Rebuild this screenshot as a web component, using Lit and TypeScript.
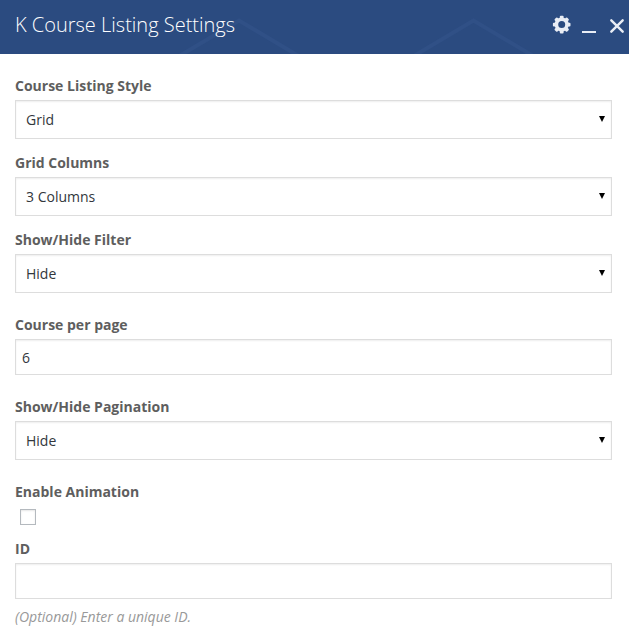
import { LitElement, html, css, svg } from "lit";
import { customElement, property } from "lit/decorators.js";
import { classMap } from "lit/directives/class-map.js";

const teeth = [0, 45, 90, 135, 180, 225, 270, 315];

@customElement("panel-header")
class PanelHeader extends LitElement {
  @property() heading = "";

  static styles = css`
    :host {
      display: flex;
      box-sizing: border-box;
      height: 54px;
      background: #2b4b80;
      color: #fff;
      position: relative;
      overflow: hidden;
      padding-left: 15px;
    }
    .pattern {
      position: absolute;
      inset: 0;
      width: 629px;
      height: 54px;
      fill: none;
      stroke: #305086;
      stroke-width: 4;
    }
    h1 {
      position: relative;
      flex: 1;
      margin: 0;
      font-size: 20px;
      font-weight: 300;
      line-height: 50px;
      white-space: nowrap;
    }
    .controls {
      position: relative;
      display: flex;
      padding-top: 15px;
    }
    .controls svg {
      display: block;
      height: 20px;
    }
    .gear { width: 20px; margin-right: 10px; }
    .minimize { width: 14px; margin-right: 13px; }
    .close { width: 20px; }
  `;

  render() {
    return html`
      <svg class="pattern" viewBox="0 0 629 54">
        <path d="M176 58 239 20.5 302 58M410.5 58 473.5 20.5 536.5 58" />
      </svg>
      <h1>${this.heading}</h1>
      <div class="controls">
        <svg class="gear" viewBox="0 0 20 20" fill="#e9edf5">
          ${teeth.map((a) => svg`<rect x="7.8" y="0.8" width="3.8" height="4" rx="1" transform="rotate(${a} 9.7 9.6)" />`)}
          <circle cx="9.7" cy="9.6" r="5.3" fill="none" stroke="#e9edf5" stroke-width="3.6" />
        </svg>
        <svg class="minimize" viewBox="0 0 14 20"><path fill="#e9edf5" d="M0 16h14v2H0z" /></svg>
        <svg class="close" viewBox="0 0 20 20">
          <path d="M2.3 5.3 13.7 16.7M13.7 5.3 2.3 16.7" fill="none" stroke="#e9edf5" stroke-width="2.4" stroke-linecap="round" />
        </svg>
      </div>
    `;
  }
}

@customElement("setting-field")
class SettingField extends LitElement {
  @property() label = "";
  @property() kind = "text";
  @property() value = "";
  @property() hint = "";

  static styles = css`
    :host { display: block; }
    .label {
      height: 20px;
      margin-bottom: 4px;
      font-weight: 700;
      line-height: 20px;
      color: #5e5e5e;
    }
    .control {
      display: flex;
      align-items: center;
      justify-content: space-between;
      box-sizing: border-box;
      height: 36px;
      padding: 0 6px;
      border: 1px solid #ddd;
      box-shadow: inset 0 1px 2px rgba(0, 0, 0, 0.07);
      background: #fff;
      color: #32373c;
    }
    .select { height: 39px; padding: 0 6px 0 10px; }
    .arrow { width: 6px; height: 6px; margin-bottom: 1px; }
    .checkbox {
      box-sizing: border-box;
      width: 16px;
      height: 16px;
      margin: 7px 0 0 5px;
      border: 1px solid #b4b9be;
      box-shadow: inset 0 1px 2px rgba(0, 0, 0, 0.1);
    }
    .hint {
      margin-top: 8px;
      line-height: 20px;
      font-style: italic;
      color: #999;
    }
  `;

  render() {
    const select = this.kind === "select";
    return html`
      <div class="label">${this.label}</div>
      ${this.kind === "checkbox"
        ? html`<div class="checkbox"></div>`
        : html`<div class=${classMap({ control: true, select })}>
            <span>${this.value}</span>
            ${select
              ? html`<svg class="arrow" viewBox="0 0 6 6"><path d="M0 0h6L3 6z" /></svg>`
              : null}
          </div>`}
      ${this.hint ? html`<div class="hint">${this.hint}</div>` : null}
    `;
  }
}

@customElement("app-root")
class AppRoot extends LitElement {
  static styles = css`
    :host {
      display: block;
      height: 635px;
      overflow: hidden;
      background: #fff;
      font: 14px "Open Sans", "Noto Sans", sans-serif;
    }
    .form {
      display: flex;
      flex-direction: column;
      gap: 22px;
      padding: 22px 17px 0 15px;
    }
    .group {
      display: flex;
      flex-direction: column;
      gap: 14px;
    }
  `;

  render() {
    return html`
      <panel-header heading="K Course Listing Settings"></panel-header>
      <div class="form">
        <div class="group">
          <setting-field kind="select" label="Course Listing Style" value="Grid"></setting-field>
          <setting-field kind="select" label="Grid Columns" value="3 Columns"></setting-field>
          <setting-field kind="select" label="Show/Hide Filter" value="Hide"></setting-field>
        </div>
        <setting-field label="Course per page" value="6"></setting-field>
        <setting-field kind="select" label="Show/Hide Pagination" value="Hide"></setting-field>
        <div class="group">
          <setting-field kind="checkbox" label="Enable Animation"></setting-field>
          <setting-field label="ID" hint="(Optional) Enter a unique ID."></setting-field>
        </div>
      </div>
    `;
  }
}
